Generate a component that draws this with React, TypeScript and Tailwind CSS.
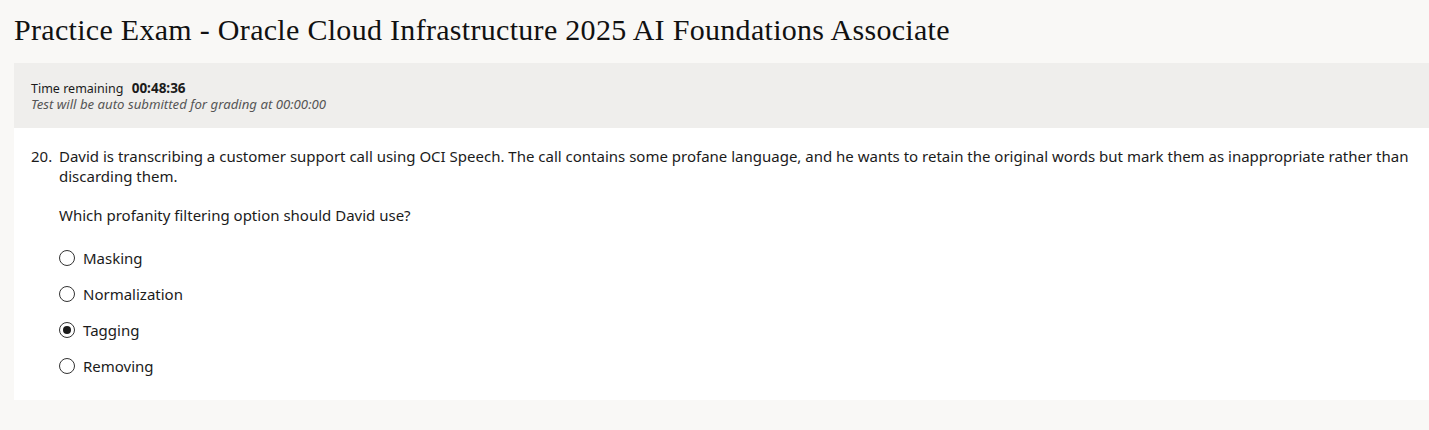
import React from "react";

const options = ["Masking", "Normalization", "Tagging", "Removing"];

function Radio({ checked }: { checked: boolean }) {
  return (
    <span className="flex h-[16px] w-[16px] items-center justify-center rounded-full border border-[#333333] bg-white">
      {checked && <span className="h-[8px] w-[8px] rounded-full bg-[#1a1a1a]" />}
    </span>
  );
}

export default function App() {
  const selected = "Tagging";
  return (
    <div className="min-h-[430px] bg-[#f9f8f6] pl-[14px] pb-[31px] font-['Noto_Sans',sans-serif] text-[#1b1b1b]">
      <h1 className="pt-[9px] pb-[13px] font-['Liberation_Serif',serif] text-[30px] leading-[41px] tracking-[0.3px] text-[#111111]">
        Practice Exam - Oracle Cloud Infrastructure 2025 AI Foundations Associate
      </h1>

      <div className="bg-[#efeeec] px-[17px] pt-[17px] pb-[16px] leading-[16px]">
        <div className="h-[16px] text-[12.5px]">
          Time remaining <span className="ml-[5px] text-[13.5px] font-bold">00:48:36</span>
        </div>
        <div className="text-[13.2px] italic text-[#555555]">Test will be auto submitted for grading at 00:00:00</div>
      </div>

      <div className="bg-white pt-[18px] pb-[24px] pr-[14px] text-[15px] leading-[20px]">
        <div className="flex">
          <span className="w-[45px] shrink-0 pl-[17px]">20.</span>
          <div>
            <p>
              David is transcribing a customer support call using OCI Speech. The call contains some profane language,
              and he wants to retain the original words but mark them as inappropriate rather than discarding them.
            </p>
            <p className="mt-[19px]">Which profanity filtering option should David use?</p>
            <div className="mt-[23px] flex flex-col gap-[16px]">
              {options.map((o) => (
                <label key={o} className="flex items-center gap-[8px]">
                  <Radio checked={o === selected} />
                  <span>{o}</span>
                </label>
              ))}
            </div>
          </div>
        </div>
      </div>
    </div>
  );
}
